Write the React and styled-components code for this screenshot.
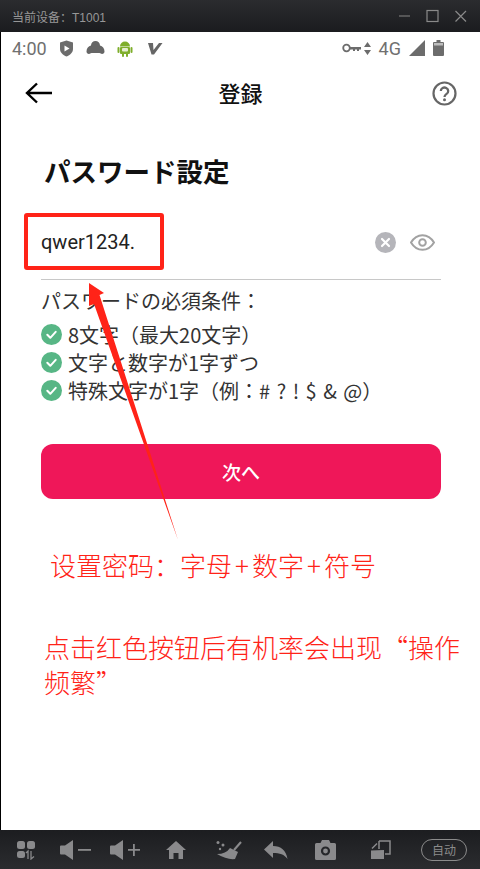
import React from 'react'
import styled, { createGlobalStyle } from 'styled-components'

const Global = createGlobalStyle`
    html, body { margin: 0; padding: 0; background: #fff; }
    * { box-sizing: border-box; }
`

const JP = `"Noto Sans CJK JP", "Noto Sans", sans-serif`
const SC = `"Noto Sans CJK SC", sans-serif`

const Window = styled.div`
    position: relative;
    width: 480px;
    height: 869px;
    display: flex;
    flex-direction: column;
    overflow: hidden;
    font-family: ${JP};
`

const TitleBar = styled.div`
    height: 32px;
    flex: none;
    display: flex;
    align-items: center;
    justify-content: space-between;
    padding: 0 11px 0 12px;
    background: linear-gradient(#2b2c2f, #1b1c1f);
`

const DeviceName = styled.span`
    font-family: "Liberation Sans", ${SC};
    font-size: 12px;
    color: #979797;
`

const WinButtons = styled.div`
    display: flex;
    gap: 12px;
    align-items: center;
`

const Screen = styled.div`
    flex: 1;
    display: flex;
    flex-direction: column;
    background: #fff;
    border-left: 1px solid #000;
`

const StatusBar = styled.div`
    height: 32px;
    flex: none;
    display: flex;
    align-items: center;
    justify-content: space-between;
    padding: 0 36px 0 11px;
    color: #6c6c6c;
`

const StatusGroup = styled.div`
    display: flex;
    align-items: center;
    gap: ${(props) => props.gap || 8}px;
`

const StatusText = styled.span`
    font-family: Roboto, sans-serif;
    font-size: 18px;
    color: #707070;
`

const Header = styled.div`
    height: 58px;
    flex: none;
    display: flex;
    align-items: center;
    justify-content: space-between;
    padding: 0 23px 0 23px;
`

const HeaderTitle = styled.h1`
    margin: 0 5px 3px 0;
    font-size: 22px;
    font-weight: 500;
    color: #111;
    line-height: 30px;
`

const Content = styled.div`
    padding: 0 39px 0 40px;
    display: flex;
    flex-direction: column;
`

const PageTitle = styled.h2`
    margin: 32px 0 0 3px;
    font-size: 26.5px;
    font-weight: 700;
    line-height: 34px;
    color: #111;
`

const InputRow = styled.div`
    margin-top: 27px;
    height: 65px;
    display: flex;
    align-items: center;
    justify-content: space-between;
    padding: 0 6px 10px 0;
    border-bottom: 1px solid #c8c8c8;
`

const InputText = styled.span`
    font-family: Roboto, sans-serif;
    font-size: 20px;
    color: #222;
`

const InputIcons = styled.div`
    display: flex;
    align-items: center;
    gap: 14px;
`

const RulesTitle = styled.div`
    margin-top: 7px;
    font-size: 20px;
    line-height: 28px;
    color: #333;
`

const RuleRow = styled.div`
    display: flex;
    align-items: center;
    gap: 6px;
    height: 28px;
    margin-top: ${(props) => (props.first ? 5 : 0)}px;
    font-size: 20px;
    word-spacing: 2px;
    color: #333;
`

const NextButton = styled.button`
    margin-top: 40px;
    height: 55px;
    width: 400px;
    border: none;
    border-radius: 12px;
    background: #ef1759;
    color: #fff;
    font-family: ${JP};
    font-size: 19px;
    font-weight: 500;
`

const Note = styled.p`
    margin: ${(props) => props.top}px 0 0 ${(props) => props.left}px;
    width: 425px;
    font-family: ${SC};
    font-size: 26px;
    font-weight: 300;
    line-height: 35px;
    color: #ff2318;
`

const Plus = styled.span`
    margin: 0 3px;
`

const BottomBar = styled.div`
    height: 39px;
    flex: none;
    display: flex;
    align-items: center;
    padding-left: 16px;
    background: linear-gradient(#1c1d20, #2b2c2f);
`

const BarItem = styled.div`
    display: flex;
    margin-left: ${(props) => props.gap || 0}px;
`

const AutoPill = styled.span`
    width: 46px;
    height: 22px;
    border: 1px solid #8b8b8b;
    border-radius: 11px;
    display: flex;
    align-items: center;
    justify-content: center;
    font-family: ${SC};
    font-size: 12px;
    color: #8b8b8b;
`

const RedBox = styled.div`
    position: absolute;
    left: 24px;
    top: 213px;
    width: 140px;
    height: 57px;
    border: 4px solid #ff2318;
    border-radius: 3px;
`

const ArrowLayer = styled.svg`
    position: absolute;
    left: 0;
    top: 0;
    pointer-events: none;
`

const Check = () => (
    <svg width="21" height="21" viewBox="0 0 21 21">
        <circle cx="10.5" cy="10.5" r="10.5" fill="#57b685" />
        <path d="M6.3 10.8l3 3 5.4-6" fill="none" stroke="#fff" strokeWidth="2" strokeLinecap="round" strokeLinejoin="round" />
    </svg>
)

const rules = ['8文字（最大20文字）', '文字と数字が1字ずつ', '特殊文字が1字（例：# ? ! $ & @）']

const iconGrey = '#8a8a8c'

const App = () => {
    return (
        <Window>
            <Global />
            <TitleBar>
                <DeviceName>当前设备：T1001</DeviceName>
                <WinButtons>
                    <svg width="16" height="16" viewBox="0 0 16 16"><path d="M2 8h11" stroke="#777" strokeWidth="1.2" /></svg>
                    <svg width="16" height="16" viewBox="0 0 16 16"><rect x="2" y="2.5" width="11" height="11" fill="none" stroke="#8a8a8a" strokeWidth="1.2" /></svg>
                    <svg width="16" height="16" viewBox="0 0 16 16"><path d="M2.5 3l10.5 10.5M13 3L2.5 13.5" stroke="#8a8a8a" strokeWidth="1.2" /></svg>
                </WinButtons>
            </TitleBar>
            <Screen>
                <StatusBar>
                    <StatusGroup gap={12}>
                        <StatusText>4:00</StatusText>
                        <svg width="15" height="17" viewBox="0 0 15 17">
                            <path d="M1 2.500L7.500 0.500 14 2.500V9c0 3.500-3 6-6.500 7.500C4 15 1 12.500 1 9z" fill="#6c6c6c" />
                            <path d="M5.500 5.500l5 3-5 3z" fill="#fff" />
                        </svg>
                        <svg width="19" height="14" viewBox="0 0 19 14">
                            <path d="M5 4.500a4.500 4.500 0 0 1 9 0c2.500 .5 4.500 3 4.500 6 0 1.500-1 2.500-2.500 2.500-1 0-1.500-1-2.500-1H5.500C4.500 12 4 13 3 13 1.500 13 .5 12 .5 10.500c0-3 2-5.500 4.500-6z" fill="#666" />
                        </svg>
                        <svg width="16" height="17" viewBox="0 0 16 17">
                            <path d="M3 6.500a5 5 0 0 1 10 0z" fill="#7fae2c" />
                            <rect x="3" y="7" width="10" height="7" rx="1" fill="#7fae2c" />
                            <rect x="0.500" y="7" width="2" height="6" rx="1" fill="#7fae2c" />
                            <rect x="13.500" y="7" width="2" height="6" rx="1" fill="#7fae2c" />
                            <rect x="5" y="13" width="2" height="4" rx="1" fill="#7fae2c" />
                            <rect x="9" y="13" width="2" height="4" rx="1" fill="#7fae2c" />
                            <rect x="5" y="8" width="6" height="3.500" rx="1" fill="#e6eed2" />
                        </svg>
                        <svg width="16" height="13" viewBox="0 0 16 13" style={{ marginLeft: 2 }}>
                            <path d="M1 1h5l.5 7L12 1h3.500L7 12.500H4.500z" fill="#666" />
                        </svg>
                    </StatusGroup>
                    <StatusGroup gap={8}>
                        <svg width="20" height="10" viewBox="0 0 20 10">
                            <circle cx="4.500" cy="5" r="3.300" fill="none" stroke="#6c6c6c" strokeWidth="1.800" />
                            <path d="M8 4h11v2.500h-2V8h-2V6.500h-2V8h-2V6.500H8z" fill="#6c6c6c" />
                        </svg>
                        <svg width="7" height="13" viewBox="0 0 7 13" style={{ marginLeft: -6 }}>
                            <path d="M3.500 0L7 5H0zM0 8h7l-3.500 5z" fill="#6c6c6c" />
                        </svg>
                        <StatusText>4G</StatusText>
                        <svg width="16" height="16" viewBox="0 0 16 16"><path d="M16 0v16H0z" fill="#6c6c6c" /></svg>
                        <svg width="11" height="16" viewBox="0 0 11 16">
                            <path d="M3.500 0h4v2H10a1 1 0 0 1 1 1v12a1 1 0 0 1-1 1H1a1 1 0 0 1-1-1V3a1 1 0 0 1 1-1h2.500z" fill="#6c6c6c" />
                            <rect x="1" y="3" width="9" height="2.500" fill="#bdbdbd" />
                        </svg>
                    </StatusGroup>
                </StatusBar>
                <Header>
                    <svg width="30" height="24" viewBox="0 0 30 24">
                        <path d="M28 12H3M13 2.500L3 12l10 9.500" fill="none" stroke="#000" strokeWidth="2.400" />
                    </svg>
                    <HeaderTitle>登録</HeaderTitle>
                    <svg width="25" height="25" viewBox="0 0 25 25">
                        <circle cx="12.500" cy="12.500" r="11" fill="none" stroke="#666" strokeWidth="2.200" />
                        <path d="M8.800 10a3.700 3.500 0 1 1 5.800 2.900c-1.400 1-2.100 1.500-2.100 3" fill="none" stroke="#666" strokeWidth="2.300" />
                        <circle cx="12.500" cy="18.800" r="1.500" fill="#666" />
                    </svg>
                </Header>
                <Content>
                    <PageTitle>パスワード設定</PageTitle>
                    <InputRow>
                        <InputText>qwer1234.</InputText>
                        <InputIcons>
                            <svg width="21" height="21" viewBox="0 0 21 21">
                                <circle cx="10.500" cy="10.500" r="10.500" fill="#b5b5ba" />
                                <path d="M7 7l7 7M14 7l-7 7" stroke="#fff" strokeWidth="2.200" strokeLinecap="round" />
                            </svg>
                            <svg width="25" height="17" viewBox="0 0 25 17">
                                <path d="M1 8.500C4 3.500 8 1.200 12.500 1.200S21 3.500 24 8.500C21 13.500 17 15.800 12.500 15.800S4 13.500 1 8.500z" fill="none" stroke="#a2a2a2" strokeWidth="2" />
                                <circle cx="12.500" cy="8.500" r="3.300" fill="none" stroke="#a2a2a2" strokeWidth="2" />
                            </svg>
                        </InputIcons>
                    </InputRow>
                    <RulesTitle>パスワードの必須条件：</RulesTitle>
                    {rules.map((rule, i) => (
                        <RuleRow key={rule} first={i === 0}>
                            <Check />
                            <span>{rule}</span>
                        </RuleRow>
                    ))}
                    <NextButton>次へ</NextButton>
                    <Note top={48} left={9}>设置密码：字母<Plus>+</Plus>数字<Plus>+</Plus>符号</Note>
                    <Note top={47} left={3}>点击红色按钮后有机率会出现“操作频繁”</Note>
                </Content>
            </Screen>
            <BottomBar>
                <BarItem>
                    <svg width="20" height="20" viewBox="0 0 20 20" fill={iconGrey}>
                        <rect x="1" y="1" width="8" height="8" rx="2.500" />
                        <rect x="11" y="1" width="8" height="8" rx="2.500" />
                        <rect x="1" y="11" width="8" height="7" rx="2.500" />
                        <path d="M12 19v-8l-2 2M15 11v8l3-2.500" fill="none" stroke={iconGrey} strokeWidth="1.300" />
                    </svg>
                </BarItem>
                <BarItem gap={24}>
                    <svg width="31" height="20" viewBox="0 0 31 20" fill={iconGrey}>
                        <path d="M0 6.500q0-1 1-1h4L13 0v20L5 14.500H1q-1 0-1-1z" />
                        <rect x="18" y="9" width="13" height="1.800" />
                    </svg>
                </BarItem>
                <BarItem gap={19}>
                    <svg width="31" height="20" viewBox="0 0 31 20" fill={iconGrey}>
                        <path d="M0 6.500q0-1 1-1h4L13 0v20L5 14.500H1q-1 0-1-1z" />
                        <path d="M18 9h5V4h1.800v5H30v1.800h-5.200V16H23v-5.200h-5z" />
                    </svg>
                </BarItem>
                <BarItem gap={25}>
                    <svg width="20" height="18" viewBox="0 0 20 18" fill={iconGrey}>
                        <path d="M10 0l10 9h-3v9h-4.500v-6h-5v6H3V9H0z" />
                    </svg>
                </BarItem>
                <BarItem gap={29}>
                    <svg width="27" height="20" viewBox="0 0 27 20" fill={iconGrey}>
                        <circle cx="3" cy="2.500" r="1.500" />
                        <circle cx="8" cy="5" r="1.500" />
                        <circle cx="5" cy="9" r="1.200" />
                        <path d="M15 8L23 12 20 19Q12 20 2 14 11 14 15 8z" />
                        <path d="M19 10L26 2" stroke={iconGrey} strokeWidth="2" />
                    </svg>
                </BarItem>
                <BarItem gap={22}>
                    <svg width="24" height="18" viewBox="0 0 24 18" fill={iconGrey}>
                        <path d="M9 0v5c8 0 13 4 14.500 13-3-4.500-8-6-14.500-6v5L0 8.500z" />
                    </svg>
                </BarItem>
                <BarItem gap={27}>
                    <svg width="21" height="20" viewBox="0 0 21 20">
                        <path d="M1.500 3h4l1.500-3h7l1.500 3h4q1.500 0 1.500 1.500v14q0 1.500-1.500 1.500h-18Q0 20 0 18.500v-14Q0 3 1.500 3z" fill={iconGrey} />
                        <circle cx="10.500" cy="11" r="3.500" fill="none" stroke="#26272a" strokeWidth="2.200" />
                    </svg>
                </BarItem>
                <BarItem gap={35}>
                    <svg width="20" height="20" viewBox="0 0 20 20" fill="none" stroke={iconGrey}>
                        <path d="M0 10.500V19h13v-9z" fill={iconGrey} stroke="none" />
                        <path d="M8 1h11v13h-5" strokeWidth="1.500" />
                        <path d="M8 1v8M1 8.500L6 3.500" strokeWidth="1.500" />
                    </svg>
                </BarItem>
                <BarItem gap={30}>
                    <AutoPill>自动</AutoPill>
                </BarItem>
            </BottomBar>
            <RedBox />
            <ArrowLayer width="480" height="869" viewBox="0 0 480 869">
                <path d="M89 283L104 293 99.500 295 178 540 94 304 89 306z" fill="#ff2318" />
            </ArrowLayer>
        </Window>
    )
}

export default App
